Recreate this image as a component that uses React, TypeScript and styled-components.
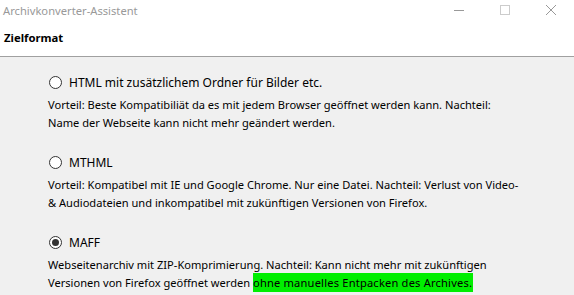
import React from 'react';
import styled, { createGlobalStyle } from 'styled-components';

const GlobalStyle = createGlobalStyle`
  html, body {
    margin: 0;
    padding: 0;
    background: #f0f0f0;
    font-family: "Noto Sans", "Open Sans", sans-serif;
    font-size: 11.1px;
    color: #000;
  }
`;

const Window = styled.div`
  width: 574px;
  height: 295px;
  display: flex;
  flex-direction: column;
  background: #f0f0f0;
  overflow: hidden;
`;

const TitleBar = styled.div`
  height: 30px;
  display: flex;
  align-items: flex-start;
  background: #fff;
`;

const Title = styled.div`
  flex: 1;
  padding: 3px 0 0 3px;
  color: #999;
  font-size: 11.2px;
`;

const Controls = styled.div`
  display: flex;
`;

const ControlButton = styled.div`
  width: 46px;
  height: 20px;
  display: flex;
  align-items: center;
  justify-content: center;
`;

const Header = styled.div`
  height: 26px;
  background: #fff;
  border-bottom: 1px solid #a0a0a0;
  padding-left: 4px;
  font-weight: bold;
  font-size: 11.3px;
`;

const Body = styled.div`
  padding: 15px 0 0 48px;
  display: flex;
  flex-direction: column;
  gap: 20px;
`;

const Option = styled.div`
  display: flex;
  flex-direction: column;
  gap: 4px;
`;

const RadioRow = styled.label`
  display: flex;
  align-items: center;
  gap: 7px;
  height: 20px;
  padding-left: 1px;
  font-size: 12px;
`;

const Radio = styled.span<{ $checked?: boolean }>`
  width: 11px;
  height: 11px;
  border: 1px solid #333;
  border-radius: 50%;
  background: #fff;
  display: flex;
  align-items: center;
  justify-content: center;
  &::after {
    content: '';
    display: ${(p) => (p.$checked ? 'block' : 'none')};
    width: 7px;
    height: 7px;
    border-radius: 50%;
    background: #333;
  }
`;

const Desc = styled.div`
  line-height: 18px;
`;

const Mark = styled.span`
  background: #00ee00;
  padding: 2px 1px 2px 0;
  letter-spacing: 0.2px;
`;

const options = [
  {
    label: 'HTML mit zusätzlichem Ordner für Bilder etc.',
    lines: [
      'Vorteil: Beste Kompatibiliät da es mit jedem Browser geöffnet werden kann. Nachteil:',
      'Name der Webseite kann nicht mehr geändert werden.',
    ],
  },
  {
    label: 'MTHML',
    lines: [
      'Vorteil: Kompatibel mit IE und Google Chrome. Nur eine Datei. Nachteil: Verlust von Video-',
      '& Audiodateien und inkompatibel mit zukünftigen Versionen von Firefox.',
    ],
  },
];

const App = () => {
  return (
    <Window>
      <GlobalStyle />
      <TitleBar>
        <Title>Archivkonverter-Assistent</Title>
        <Controls>
          <ControlButton>
            <svg width="10" height="10" viewBox="0 0 10 10">
              <line x1="0" y1="5.5" x2="10" y2="5.5" stroke="#999" strokeWidth="1" />
            </svg>
          </ControlButton>
          <ControlButton>
            <svg width="10" height="10" viewBox="0 0 10 10">
              <rect x="0.5" y="0.5" width="9" height="9" fill="none" stroke="#ccc" strokeWidth="1" />
            </svg>
          </ControlButton>
          <ControlButton>
            <svg width="10" height="10" viewBox="0 0 10 10">
              <path d="M0 0 L10 10 M10 0 L0 10" stroke="#999" strokeWidth="1" />
            </svg>
          </ControlButton>
        </Controls>
      </TitleBar>
      <Header>Zielformat</Header>
      <Body>
        {options.map((o) => (
          <Option key={o.label}>
            <RadioRow>
              <Radio />
              {o.label}
            </RadioRow>
            <Desc>
              {o.lines[0]}
              <br />
              {o.lines[1]}
            </Desc>
          </Option>
        ))}
        <Option>
          <RadioRow>
            <Radio $checked />
            MAFF
          </RadioRow>
          <Desc>
            Webseitenarchiv mit ZIP-Komprimierung. Nachteil: Kann nicht mehr mit zukünftigen
            <br />
            Versionen von Firefox geöffnet werden <Mark>ohne manuelles Entpacken des Archives.</Mark>
          </Desc>
        </Option>
      </Body>
    </Window>
  );
};

export default App;
